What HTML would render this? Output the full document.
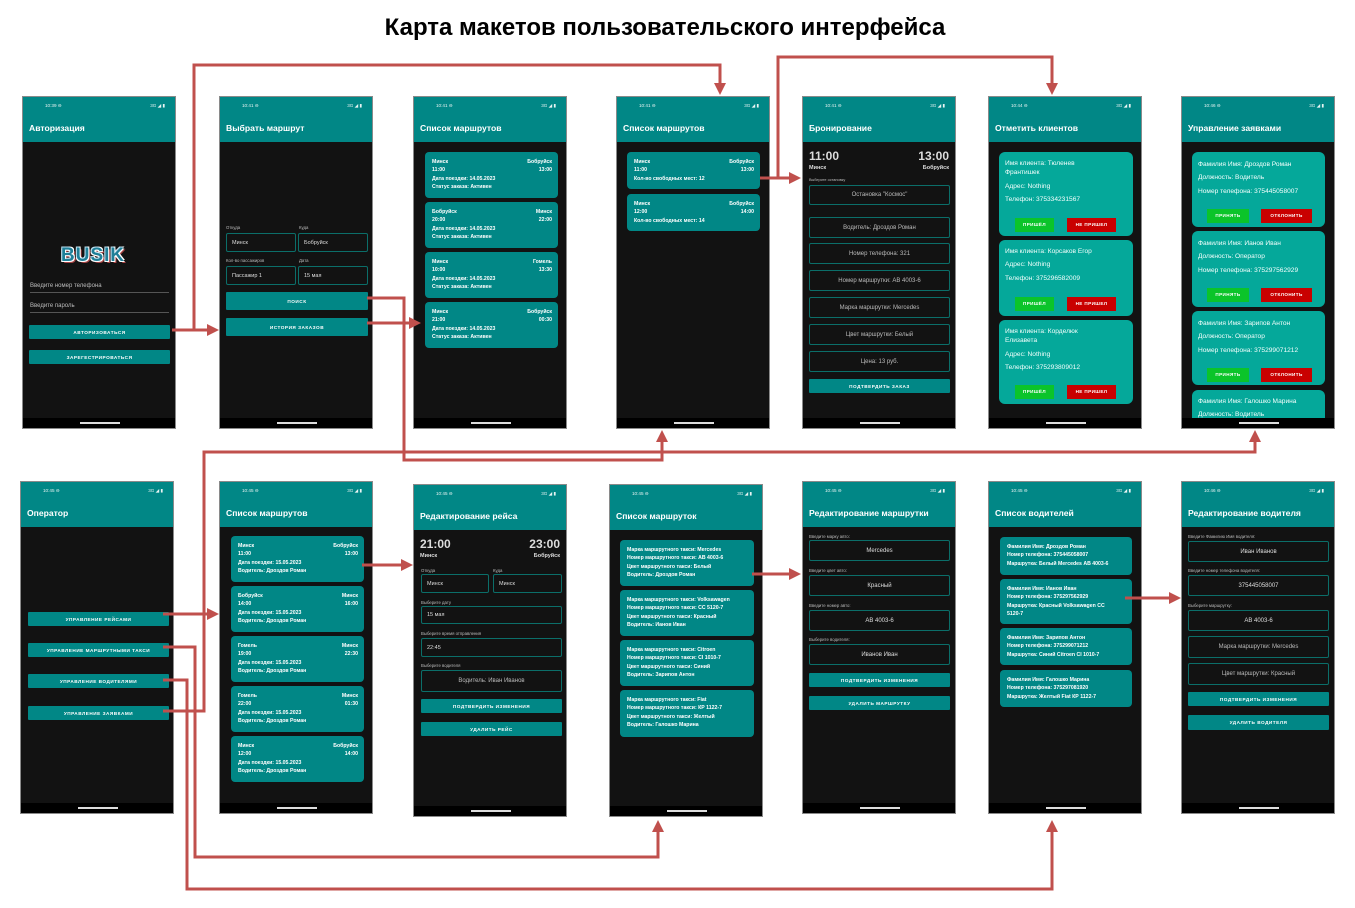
<!DOCTYPE html>
<html><head><meta charset="utf-8">
<style>
*{box-sizing:border-box;margin:0;padding:0}
body{width:1355px;height:908px;background:#fff;position:relative;overflow:hidden;font-family:"Liberation Sans","DejaVu Sans",sans-serif}
.title{position:absolute;left:0;width:1330px;top:14px;text-align:center;font-size:24px;font-weight:bold;color:#000}
.s{position:absolute;width:154px;height:333px;background:#121212;border:1px solid #8a8a8a;overflow:hidden}
.st{position:absolute;left:0;top:0;width:100%;height:18px;background:#018786;color:#e8f4f3;font-size:4.6px}
.st span{position:absolute;left:22px;top:6px}
.st b{position:absolute;right:10px;top:6px;font-weight:normal}
.hd{position:absolute;left:0;top:18px;width:100%;height:27px;background:#018786;color:#fff;font-weight:bold;font-size:8.6px;padding-left:6px;line-height:26px}
.nv{position:absolute;left:0;bottom:0;width:100%;height:10px;background:#000}
.nv:after{content:"";position:absolute;left:57px;width:40px;top:4px;height:1.5px;background:#ddd}
.lbl{position:absolute;font-size:4.3px;color:#bbb;white-space:nowrap}
.box{position:absolute;border:1px solid #0b6e69;border-radius:2px;color:#bbb;font-size:6px;display:flex;align-items:center;justify-content:center;white-space:nowrap}
.box.l{justify-content:flex-start;padding-left:5px;color:#ddd;font-size:5.5px}
.btn{position:absolute;background:#018786;color:#fff;font-size:4.7px;font-weight:bold;letter-spacing:.5px;display:flex;align-items:center;justify-content:center;border-radius:1px;white-space:nowrap}
.card{position:absolute;background:#018786;border-radius:4px;color:#fff;font-size:5.2px;font-weight:bold;line-height:8.3px;padding:6px 6px 0 7px;white-space:nowrap}
.card .r{display:flex;justify-content:space-between}
.cc{position:absolute;background:#05a89a;border-radius:6px;color:#f4fffd;font-size:6.6px;line-height:8.5px;padding:0 6px}
.cc p{position:absolute;left:6px;white-space:nowrap}
.g,.rd{position:absolute;height:14px;color:#fff;font-size:4.6px;font-weight:bold;letter-spacing:.4px;display:flex;align-items:center;justify-content:center}
.g{background:#0bc42a}.rd{background:#c90000}
.tm{position:absolute;color:#ddd;font-size:12px;font-weight:bold}
.ct{position:absolute;color:#ddd;font-size:5.5px;font-weight:bold}
.ul{position:absolute;left:7px;width:139px;height:1px;background:#555}
.in{position:absolute;left:7px;font-size:6px;color:#bbb}
</style></head><body>
<div class="title">Карта макетов пользовательского интерфейса</div>

<!-- TOP ROW -->
<div class="s" style="left:22px;top:96px">
<div class="st"><span>10:39 ⊖</span><b>3G ◢ ▮</b></div><div class="hd">Авторизация</div>
<div style="position:absolute;left:38px;top:148px;font-size:19px;font-weight:bold;color:#1f7f98;letter-spacing:1px;text-shadow:1px 1px 0 #fff,-1px -1px 0 #bde,1px -1px 0 #fff,-1px 1px 0 #fff,2px 2px 0 #a44">BUSIK</div>
<div class="in" style="top:186px">Введите номер телефона</div><div class="ul" style="top:195px"></div>
<div class="in" style="top:206px">Введите пароль</div><div class="ul" style="top:215px"></div>
<div class="btn" style="left:6px;width:141px;top:228px;height:14px">АВТОРИЗОВАТЬСЯ</div>
<div class="btn" style="left:6px;width:141px;top:253px;height:14px">ЗАРЕГЕСТРИРОВАТЬСЯ</div>
<div class="nv"></div></div>

<div class="s" style="left:219px;top:96px">
<div class="st"><span>10:41 ⊖</span><b>3G ◢ ▮</b></div><div class="hd">Выбрать маршрут</div>
<div class="lbl" style="left:6px;top:128px">Откуда</div><div class="lbl" style="left:79px;top:128px">Куда</div>
<div class="box l" style="left:6px;top:136px;width:70px;height:19px">Минск</div>
<div class="box l" style="left:78px;top:136px;width:70px;height:19px">Бобруйск</div>
<div class="lbl" style="left:6px;top:161px">Кол-во пассажиров</div><div class="lbl" style="left:79px;top:161px">Дата</div>
<div class="box l" style="left:6px;top:169px;width:70px;height:19px">Пассажир 1</div>
<div class="box l" style="left:78px;top:169px;width:70px;height:19px">15 мая</div>
<div class="btn" style="left:6px;width:142px;top:195px;height:18px">ПОИСК</div>
<div class="btn" style="left:6px;width:142px;top:221px;height:18px">ИСТОРИЯ ЗАКАЗОВ</div>
<div class="nv"></div></div>

<div class="s" style="left:413px;top:96px">
<div class="st"><span>10:41 ⊖</span><b>3G ◢ ▮</b></div><div class="hd">Список маршрутов</div>
<div class="card" style="left:11px;top:55px;width:133px;height:46px"><div class="r"><span>Минск</span><span>Бобруйск</span></div><div class="r"><span>11:00</span><span>13:00</span></div><div>Дата поездки: 14.05.2023</div><div>Статус заказа: Активен</div></div>
<div class="card" style="left:11px;top:105px;width:133px;height:46px"><div class="r"><span>Бобруйск</span><span>Минск</span></div><div class="r"><span>20:00</span><span>22:00</span></div><div>Дата поездки: 14.05.2023</div><div>Статус заказа: Активен</div></div>
<div class="card" style="left:11px;top:155px;width:133px;height:46px"><div class="r"><span>Минск</span><span>Гомель</span></div><div class="r"><span>10:00</span><span>13:30</span></div><div>Дата поездки: 14.05.2023</div><div>Статус заказа: Активен</div></div>
<div class="card" style="left:11px;top:205px;width:133px;height:46px"><div class="r"><span>Минск</span><span>Бобруйск</span></div><div class="r"><span>21:00</span><span>00:30</span></div><div>Дата поездки: 14.05.2023</div><div>Статус заказа: Активен</div></div>
<div class="nv"></div></div>

<div class="s" style="left:616px;top:96px">
<div class="st"><span>10:41 ⊖</span><b>3G ◢ ▮</b></div><div class="hd">Список маршрутов</div>
<div class="card" style="left:10px;top:55px;width:133px;height:37px"><div class="r"><span>Минск</span><span>Бобруйск</span></div><div class="r"><span>11:00</span><span>13:00</span></div><div>Кол-во свободных мест: 12</div></div>
<div class="card" style="left:10px;top:97px;width:133px;height:37px"><div class="r"><span>Минск</span><span>Бобруйск</span></div><div class="r"><span>12:00</span><span>14:00</span></div><div>Кол-во свободных мест: 14</div></div>
<div class="nv"></div></div>

<div class="s" style="left:802px;top:96px">
<div class="st"><span>10:41 ⊖</span><b>3G ◢ ▮</b></div><div class="hd">Бронирование</div>
<div class="tm" style="left:6px;top:52px">11:00</div><div class="tm" style="right:6px;top:52px">13:00</div>
<div class="ct" style="left:6px;top:68px">Минск</div><div class="ct" style="right:6px;top:68px">Бобруйск</div>
<div class="lbl" style="left:6px;top:81px;font-size:3.8px">Выберите остановку</div>
<div class="box" style="left:6px;top:88px;width:141px;height:20px">Остановка "Космос"</div>
<div class="box" style="left:6px;top:120px;width:141px;height:21px">Водитель: Дроздов Роман</div>
<div class="box" style="left:6px;top:146px;width:141px;height:21px">Номер телефона: 321</div>
<div class="box" style="left:6px;top:173px;width:141px;height:21px">Номер маршрутки: АВ 4003-6</div>
<div class="box" style="left:6px;top:200px;width:141px;height:21px">Марка маршрутки: Mercedes</div>
<div class="box" style="left:6px;top:227px;width:141px;height:21px">Цвет маршрутки: Белый</div>
<div class="box" style="left:6px;top:254px;width:141px;height:21px">Цена: 13 руб.</div>
<div class="btn" style="left:6px;width:141px;top:282px;height:14px">ПОДТВЕРДИТЬ ЗАКАЗ</div>
<div class="nv"></div></div>

<div class="s" style="left:988px;top:96px">
<div class="st"><span>10:44 ⊖</span><b>3G ◢ ▮</b></div><div class="hd">Отметить клиентов</div>
<div class="cc" style="left:10px;top:55px;width:134px;height:84px"><p style="top:8px">Имя клиента: Тюленев<br>Франтишек</p><p style="top:31px">Адрес: Nothing</p><p style="top:44px">Телефон: 375334231567</p><div class="g" style="left:16px;top:66px;width:39px">ПРИШЁЛ</div><div class="rd" style="left:68px;top:66px;width:49px">НЕ ПРИШЕЛ</div></div>
<div class="cc" style="left:10px;top:143px;width:134px;height:76px"><p style="top:8px">Имя клиента: Корсаков Егор</p><p style="top:21px">Адрес: Nothing</p><p style="top:35px">Телефон: 375296582009</p><div class="g" style="left:16px;top:57px;width:39px">ПРИШЁЛ</div><div class="rd" style="left:68px;top:57px;width:49px">НЕ ПРИШЕЛ</div></div>
<div class="cc" style="left:10px;top:223px;width:134px;height:84px"><p style="top:8px">Имя клиента: Корделюк<br>Елизавета</p><p style="top:31px">Адрес: Nothing</p><p style="top:44px">Телефон: 375293809012</p><div class="g" style="left:16px;top:65px;width:39px">ПРИШЁЛ</div><div class="rd" style="left:68px;top:65px;width:49px">НЕ ПРИШЕЛ</div></div>
<div class="nv"></div></div>

<div class="s" style="left:1181px;top:96px">
<div class="st"><span>10:46 ⊖</span><b>3G ◢ ▮</b></div><div class="hd">Управление заявками</div>
<div class="cc" style="left:10px;top:55px;width:133px;height:75px"><p style="top:9px">Фамилия Имя: Дроздов Роман</p><p style="top:22px">Должность: Водитель</p><p style="top:36px">Номер телефона: 375445058007</p><div class="g" style="left:15px;top:57px;width:42px">ПРИНЯТЬ</div><div class="rd" style="left:69px;top:57px;width:51px">ОТКЛОНИТЬ</div></div>
<div class="cc" style="left:10px;top:134px;width:133px;height:76px"><p style="top:9px">Фамилия Имя: Ианов Иван</p><p style="top:22px">Должность: Оператор</p><p style="top:36px">Номер телефона: 375297562929</p><div class="g" style="left:15px;top:57px;width:42px">ПРИНЯТЬ</div><div class="rd" style="left:69px;top:57px;width:51px">ОТКЛОНИТЬ</div></div>
<div class="cc" style="left:10px;top:214px;width:133px;height:74px"><p style="top:9px">Фамилия Имя: Зарипов Антон</p><p style="top:22px">Должность: Оператор</p><p style="top:36px">Номер телефона: 375299071212</p><div class="g" style="left:15px;top:57px;width:42px">ПРИНЯТЬ</div><div class="rd" style="left:69px;top:57px;width:51px">ОТКЛОНИТЬ</div></div>
<div class="cc" style="left:10px;top:293px;width:133px;height:40px"><p style="top:8px">Фамилия Имя: Галошко Марина</p><p style="top:21px">Должность: Водитель</p></div>
<div class="nv"></div></div>

<!-- BOTTOM ROW -->
<div class="s" style="left:20px;top:481px">
<div class="st"><span>10:45 ⊖</span><b>3G ◢ ▮</b></div><div class="hd">Оператор</div>
<div class="btn" style="left:7px;width:141px;top:130px;height:14px">УПРАВЛЕНИЕ РЕЙСАМИ</div>
<div class="btn" style="left:7px;width:141px;top:161px;height:14px">УПРАВЛЕНИЕ МАРШРУТНЫМИ ТАКСИ</div>
<div class="btn" style="left:7px;width:141px;top:192px;height:14px">УПРАВЛЕНИЕ ВОДИТЕЛЯМИ</div>
<div class="btn" style="left:7px;width:141px;top:224px;height:14px">УПРАВЛЕНИЕ ЗАЯВКАМИ</div>
<div class="nv"></div></div>

<div class="s" style="left:219px;top:481px">
<div class="st"><span>10:45 ⊖</span><b>3G ◢ ▮</b></div><div class="hd">Список маршрутов</div>
<div class="card" style="left:11px;top:54px;width:133px;height:46px"><div class="r"><span>Минск</span><span>Бобруйск</span></div><div class="r"><span>11:00</span><span>13:00</span></div><div>Дата поездки: 15.05.2023</div><div>Водитель: Дроздов Роман</div></div>
<div class="card" style="left:11px;top:104px;width:133px;height:46px"><div class="r"><span>Бобруйск</span><span>Минск</span></div><div class="r"><span>14:00</span><span>16:00</span></div><div>Дата поездки: 15.05.2023</div><div>Водитель: Дроздов Роман</div></div>
<div class="card" style="left:11px;top:154px;width:133px;height:46px"><div class="r"><span>Гомель</span><span>Минск</span></div><div class="r"><span>19:00</span><span>22:30</span></div><div>Дата поездки: 15.05.2023</div><div>Водитель: Дроздов Роман</div></div>
<div class="card" style="left:11px;top:204px;width:133px;height:46px"><div class="r"><span>Гомель</span><span>Минск</span></div><div class="r"><span>22:00</span><span>01:30</span></div><div>Дата поездки: 15.05.2023</div><div>Водитель: Дроздов Роман</div></div>
<div class="card" style="left:11px;top:254px;width:133px;height:46px"><div class="r"><span>Минск</span><span>Бобруйск</span></div><div class="r"><span>12:00</span><span>14:00</span></div><div>Дата поездки: 15.05.2023</div><div>Водитель: Дроздов Роман</div></div>
<div class="nv"></div></div>

<div class="s" style="left:413px;top:484px">
<div class="st"><span>10:45 ⊖</span><b>3G ◢ ▮</b></div><div class="hd">Редактирование рейса</div>
<div class="tm" style="left:6px;top:52px">21:00</div><div class="tm" style="right:6px;top:52px">23:00</div>
<div class="ct" style="left:6px;top:68px">Минск</div><div class="ct" style="right:6px;top:68px">Бобруйск</div>
<div class="lbl" style="left:7px;top:83px">Откуда</div><div class="lbl" style="left:79px;top:83px">Куда</div>
<div class="box l" style="left:7px;top:89px;width:68px;height:19px">Минск</div>
<div class="box l" style="left:79px;top:89px;width:69px;height:19px">Минск</div>
<div class="lbl" style="left:7px;top:115px">Выберите дату</div>
<div class="box l" style="left:7px;top:121px;width:141px;height:18px">15 мая</div>
<div class="lbl" style="left:7px;top:146px">Выберите время отправления</div>
<div class="box l" style="left:7px;top:153px;width:141px;height:19px">22:45</div>
<div class="lbl" style="left:7px;top:178px">Выберите водителя</div>
<div class="box" style="left:7px;top:185px;width:141px;height:22px">Водитель: Иван Иванов</div>
<div class="btn" style="left:7px;width:141px;top:214px;height:14px">ПОДТВЕРДИТЬ ИЗМЕНЕНИЯ</div>
<div class="btn" style="left:7px;width:141px;top:237px;height:14px">УДАЛИТЬ РЕЙС</div>
<div class="nv"></div></div>

<div class="s" style="left:609px;top:484px">
<div class="st"><span>10:45 ⊖</span><b>3G ◢ ▮</b></div><div class="hd">Список маршруток</div>
<div class="card" style="left:10px;top:55px;width:134px;height:46px"><div>Марка маршрутного такси: Mercedes</div><div>Номер маршрутного такси: АВ 4003-6</div><div>Цвет маршрутного такси: Белый</div><div>Водитель: Дроздов Роман</div></div>
<div class="card" style="left:10px;top:105px;width:134px;height:46px"><div>Марка маршрутного такси: Volksawagen</div><div>Номер маршрутного такси: СС 5120-7</div><div>Цвет маршрутного такси: Красный</div><div>Водитель: Ианов Иван</div></div>
<div class="card" style="left:10px;top:155px;width:134px;height:46px"><div>Марка маршрутного такси: Citroen</div><div>Номер маршрутного такси: СІ 1010-7</div><div>Цвет маршрутного такси: Синий</div><div>Водитель: Зарипов Антон</div></div>
<div class="card" style="left:10px;top:205px;width:134px;height:47px"><div>Марка маршрутного такси: Fiat</div><div>Номер маршрутного такси: КР 1122-7</div><div>Цвет маршрутного такси: Желтый</div><div>Водитель: Галошко Марина</div></div>
<div class="nv"></div></div>

<div class="s" style="left:802px;top:481px">
<div class="st"><span>10:45 ⊖</span><b>3G ◢ ▮</b></div><div class="hd">Редактирование маршрутки</div>
<div class="lbl" style="left:6px;top:52px">Введите марку авто:</div>
<div class="box" style="left:6px;top:58px;width:141px;height:21px;color:#ddd">Mercedes</div>
<div class="lbl" style="left:6px;top:86px">Введите цвет авто:</div>
<div class="box" style="left:6px;top:93px;width:141px;height:21px;color:#ddd">Красный</div>
<div class="lbl" style="left:6px;top:121px">Введите номер авто:</div>
<div class="box" style="left:6px;top:128px;width:141px;height:21px;color:#ddd">АВ 4003-6</div>
<div class="lbl" style="left:6px;top:155px">Выберите водителя:</div>
<div class="box" style="left:6px;top:162px;width:141px;height:21px;color:#ddd">Иванов Иван</div>
<div class="btn" style="left:6px;width:141px;top:191px;height:14px">ПОДТВЕРДИТЬ ИЗМЕНЕНИЯ</div>
<div class="btn" style="left:6px;width:141px;top:214px;height:14px">УДАЛИТЬ МАРШРУТКУ</div>
<div class="nv"></div></div>

<div class="s" style="left:988px;top:481px">
<div class="st"><span>10:45 ⊖</span><b>3G ◢ ▮</b></div><div class="hd">Список водителей</div>
<div class="card" style="left:11px;top:55px;width:132px;height:38px"><div>Фамилия Имя: Дроздов Роман</div><div>Номер телефона: 375445058007</div><div>Маршрутка: Белый Mercedes АВ 4003-6</div></div>
<div class="card" style="left:11px;top:97px;width:132px;height:45px"><div>Фамилия Имя: Ианов Иван</div><div>Номер телефона: 375297562929</div><div>Маршрутка: Красный Volksawagen СС</div><div>5120-7</div></div>
<div class="card" style="left:11px;top:146px;width:132px;height:37px"><div>Фамилия Имя: Зарипов Антон</div><div>Номер телефона: 375299071212</div><div>Маршрутка: Синий Citroen СІ 1010-7</div></div>
<div class="card" style="left:11px;top:188px;width:132px;height:37px"><div>Фамилия Имя: Галошко Марина</div><div>Номер телефона: 375297081920</div><div>Маршрутка: Желтый Fiat КР 1122-7</div></div>
<div class="nv"></div></div>

<div class="s" style="left:1181px;top:481px">
<div class="st"><span>10:46 ⊖</span><b>3G ◢ ▮</b></div><div class="hd">Редактирование водителя</div>
<div class="lbl" style="left:6px;top:52px">Введите Фамилию Имя водителя:</div>
<div class="box" style="left:6px;top:59px;width:141px;height:21px;color:#ddd">Иван Иванов</div>
<div class="lbl" style="left:6px;top:86px">Введите номер телефона водителя:</div>
<div class="box" style="left:6px;top:93px;width:141px;height:21px;color:#ddd">375445058007</div>
<div class="lbl" style="left:6px;top:121px">Выберите маршрутку:</div>
<div class="box" style="left:6px;top:128px;width:141px;height:21px;color:#ddd">АВ 4003-6</div>
<div class="box" style="left:6px;top:154px;width:141px;height:22px">Марка маршрутки: Mercedes</div>
<div class="box" style="left:6px;top:181px;width:141px;height:22px">Цвет маршрутки: Красный</div>
<div class="btn" style="left:6px;width:141px;top:210px;height:14px">ПОДТВЕРДИТЬ ИЗМЕНЕНИЯ</div>
<div class="btn" style="left:6px;width:141px;top:233px;height:15px">УДАЛИТЬ ВОДИТЕЛЯ</div>
<div class="nv"></div></div>

<svg width="1355" height="908" style="position:absolute;left:0;top:0" fill="none">
<g stroke="#c0504d" stroke-width="3" stroke-linejoin="miter">
<path d="M172 330H208M194 331V65H720V84"/>
<path d="M760 178H790M778 178V57H1052V84"/>
<path d="M367 298H404V460H662V441"/>
<path d="M367 323H410"/>
<path d="M163 711H204V452H1255V441"/>
<path d="M163 614H208"/>
<path d="M163 647H195V857H658V831"/>
<path d="M163 680H187V889H1052V831"/>
<path d="M362 565H402"/>
<path d="M752 574H790"/>
<path d="M1125 598H1170"/>
</g>
<g fill="#c0504d">
<path d="M219 330l-12-6v12z"/>
<path d="M720 95l-6-12h12z"/>
<path d="M801 178l-12-6v12z"/>
<path d="M1052 95l-6-12h12z"/>
<path d="M662 430l-6 12h12z"/>
<path d="M421 323l-12-6v12z"/>
<path d="M1255 430l-6 12h12z"/>
<path d="M219 614l-12-6v12z"/>
<path d="M658 820l-6 12h12z"/>
<path d="M1052 820l-6 12h12z"/>
<path d="M413 565l-12-6v12z"/>
<path d="M801 574l-12-6v12z"/>
<path d="M1181 598l-12-6v12z"/>
</g>
</svg>
</body></html>
